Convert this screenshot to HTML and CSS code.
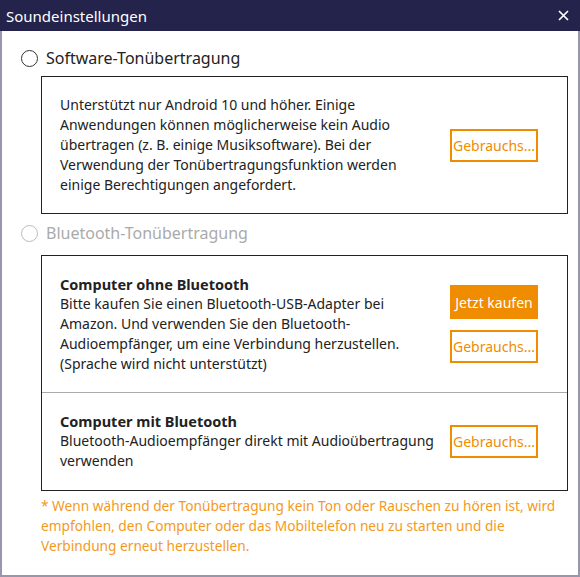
FILE: index.html
```html
<!DOCTYPE html>
<html>
<head>
    <title>Soundeinstellungen</title>
    <link rel="stylesheet" href="styles.css">
</head>
<body>
    <div class="window">
        <div class="title-bar">
            <span class="title">Soundeinstellungen</span>
            <span class="close">
                <svg width="11" height="11" viewBox="0 0 11 11">
                    <path d="M1 1 L10 10 M10 1 L1 10" stroke="#fff" stroke-width="1.7" fill="none"/>
                </svg>
            </span>
        </div>

        <div class="content">
            <div class="radio-row first">
                <span class="radio"></span>
                <span class="radio-label">Software-Tonübertragung</span>
            </div>

            <div class="box">
                <div class="section">
                    <div class="section-text">
                        Unterstützt nur Android 10 und höher. Einige Anwendungen können möglicherweise kein Audio übertragen (z. B. einige Musiksoftware). Bei der Verwendung der Tonübertragungsfunktion werden einige Berechtigungen angefordert.
                    </div>
                    <div class="buttons">
                        <button class="btn outline">Gebrauchs...</button>
                    </div>
                </div>
            </div>

            <div class="radio-row disabled">
                <span class="radio"></span>
                <span class="radio-label">Bluetooth-Tonübertragung</span>
            </div>

            <div class="box">
                <div class="section">
                    <div class="section-text">
                        <div class="section-title">Computer ohne Bluetooth</div>
                        Bitte kaufen Sie einen Bluetooth-USB-Adapter bei Amazon. Und verwenden Sie den Bluetooth-Audioempfänger, um eine Verbindung herzustellen. (Sprache wird nicht unterstützt)
                    </div>
                    <div class="buttons">
                        <button class="btn filled">Jetzt kaufen</button>
                        <button class="btn outline">Gebrauchs...</button>
                    </div>
                </div>
                <div class="section divided">
                    <div class="section-text">
                        <div class="section-title">Computer mit Bluetooth</div>
                        Bluetooth-Audioempfänger direkt mit Audioübertragung verwenden
                    </div>
                    <div class="buttons">
                        <button class="btn outline">Gebrauchs...</button>
                    </div>
                </div>
            </div>

            <p class="note">* Wenn während der Tonübertragung kein Ton oder Rauschen zu hören ist, wird empfohlen, den Computer oder das Mobiltelefon neu zu starten und die Verbindung erneut herzustellen.</p>
        </div>
    </div>
</body>
</html>
```

FILE: styles.css
```css
* {
    margin: 0;
    padding: 0;
    box-sizing: border-box;
}

body {
    font-family: "Noto Sans", "Open Sans", sans-serif;
    background-color: #fff;
    color: #222;
}

.window {
    width: 580px;
    height: 577px;
    border: 2px solid #9896ad;
    border-top: none;
    background-color: #fff;
}

.title-bar {
    height: 31px;
    margin: 0 -2px;
    background-color: #23234b;
    color: #fff;
    display: flex;
    align-items: center;
    justify-content: space-between;
    padding: 0 11px 0 6px;
    font-size: 15px;
}

.close {
    display: flex;
    align-items: center;
}

.content {
    padding: 15px 0 0 17px;
}

.radio-row {
    display: flex;
    align-items: center;
    gap: 8px;
    height: 24px;
    padding-left: 2px;
    font-size: 16px;
}

.radio {
    width: 17px;
    height: 17px;
    border: 1px solid #333;
    border-radius: 50%;
}

.radio-row.disabled {
    margin-top: 7px;
    color: #aaa;
}

.radio-row.disabled .radio {
    border-color: #bbb;
}

.box {
    margin: 6px 0 0 22px;
    width: 527px;
    border: 1px solid #222;
}

.radio-row.disabled + .box {
    margin-top: 10px;
}

.section {
    display: flex;
    align-items: center;
    gap: 10px;
    padding: 18px 29px 18px 18px;
    font-size: 14px;
    line-height: 20px;
}

.section.divided {
    border-top: 1px solid #aaa;
    padding-bottom: 19px;
}

.section-text {
    flex: 1;
}

.section-title {
    font-weight: bold;
    font-size: 14.5px;
}

.buttons {
    display: flex;
    flex-direction: column;
    gap: 11px;
}

.btn {
    width: 88px;
    height: 33px;
    border: 2px solid #f08c00;
    font-family: inherit;
    font-size: 14px;
    white-space: nowrap;
    overflow: hidden;
    cursor: pointer;
}

.btn.outline {
    background-color: #fff;
    color: #f08c00;
}

.btn.filled {
    background-color: #f08c00;
    color: #fff;
    height: 34px;
}

.note {
    margin: 5px 0 0 22px;
    width: 530px;
    color: #f39a1e;
    font-size: 13.7px;
    line-height: 20px;
}
```
